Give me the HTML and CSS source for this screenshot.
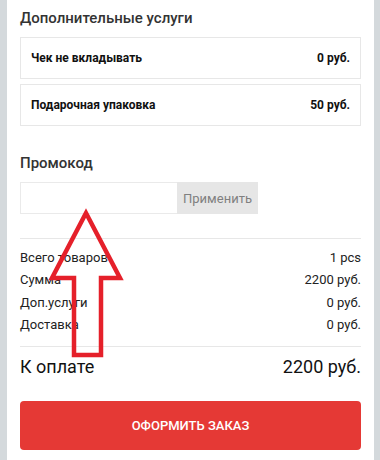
FILE: index.html
```html
<!DOCTYPE html>
<html lang="ru">
<head>
    <meta charset="UTF-8">
    <meta name="viewport" content="width=device-width, initial-scale=1.0">
    <title>Оформление заказа</title>
    <link rel="stylesheet" href="styles.css">
</head>
<body>
    <div class="card">
        <h2>Дополнительные услуги</h2>
        <div class="service">
            <span>Чек не вкладывать</span>
            <span>0 руб.</span>
        </div>
        <div class="service">
            <span>Подарочная упаковка</span>
            <span>50 руб.</span>
        </div>

        <h2 class="promo-title">Промокод</h2>
        <form class="promo">
            <input type="text" id="promo-code">
            <button type="button">Применить</button>
        </form>

        <div class="summary">
            <div class="row"><span>Всего товаров</span><span>1 pcs</span></div>
            <div class="row"><span>Сумма</span><span>2200 руб.</span></div>
            <div class="row"><span>Доп.услуги</span><span>0 руб.</span></div>
            <div class="row"><span>Доставка</span><span>0 руб.</span></div>
        </div>

        <div class="total">
            <span>К оплате</span>
            <span>2200 руб.</span>
        </div>

        <button class="checkout">Оформить заказ</button>
    </div>

    <!-- annotation arrow over the promo field -->
    <svg class="arrow" width="380" height="460" viewBox="0 0 380 460">
        <polygon points="86,213 52,278 74,278 74,355 101,355 101,278 120,278"
                 fill="none" stroke="#e5202a" stroke-width="4.5" stroke-linejoin="miter"/>
    </svg>
</body>
</html>
```

FILE: styles.css
```css
:root {
    --bg: #d4d9dc;
    --text: #222;
    --heading: #333;
    --line: #e7e7e7;
    --red: #e53935;
}

* {
    margin: 0;
    padding: 0;
    box-sizing: border-box;
    font-family: Roboto, 'Liberation Sans', Arial, sans-serif;
}

body {
    background-color: var(--bg);
    height: 460px;
    overflow: hidden;
    position: relative;
}

.card {
    background-color: white;
    margin: 0 6px 0 7px;
    padding: 8px 13px 20px 13px;
    color: var(--text);
}

h2 {
    font-size: 15px;
    font-weight: 500;
    line-height: 20px;
    color: var(--heading);
    margin-bottom: 9px;
}

.service {
    height: 42px;
    border: 1px solid var(--line);
    display: flex;
    justify-content: space-between;
    align-items: center;
    padding: 0 10px 0 10px;
    font-size: 12px;
    font-weight: 700;
    color: #111;
    margin-bottom: 5px;
}

.promo-title {
    margin-top: 27px;
}

.promo {
    display: flex;
    height: 32px;
}

.promo input {
    width: 157px;
    border: 1px solid #eaeaea;
    border-right: none;
    outline: none;
    font-size: 13px;
    padding: 0 8px;
}

.promo button {
    width: 81px;
    border: none;
    background-color: #e6e6e6;
    color: #808080;
    font-size: 13px;
    cursor: pointer;
}

.summary {
    border-top: 1px solid var(--line);
    border-bottom: 1px solid var(--line);
    margin-top: 24px;
    padding: 8px 0 10px 0;
}

.row {
    display: flex;
    justify-content: space-between;
    font-size: 13px;
    line-height: 22.3px;
}

.total {
    display: flex;
    justify-content: space-between;
    font-size: 18px;
    line-height: 26px;
    color: #111;
    margin-top: 7px;
}

.checkout {
    display: block;
    width: 100%;
    height: 49px;
    margin-top: 21px;
    background-color: var(--red);
    color: white;
    border: none;
    border-radius: 4px;
    font-size: 13px;
    font-weight: 500;
    text-transform: uppercase;
    cursor: pointer;
}

.arrow {
    position: absolute;
    left: 0;
    top: 0;
    pointer-events: none;
}
```
